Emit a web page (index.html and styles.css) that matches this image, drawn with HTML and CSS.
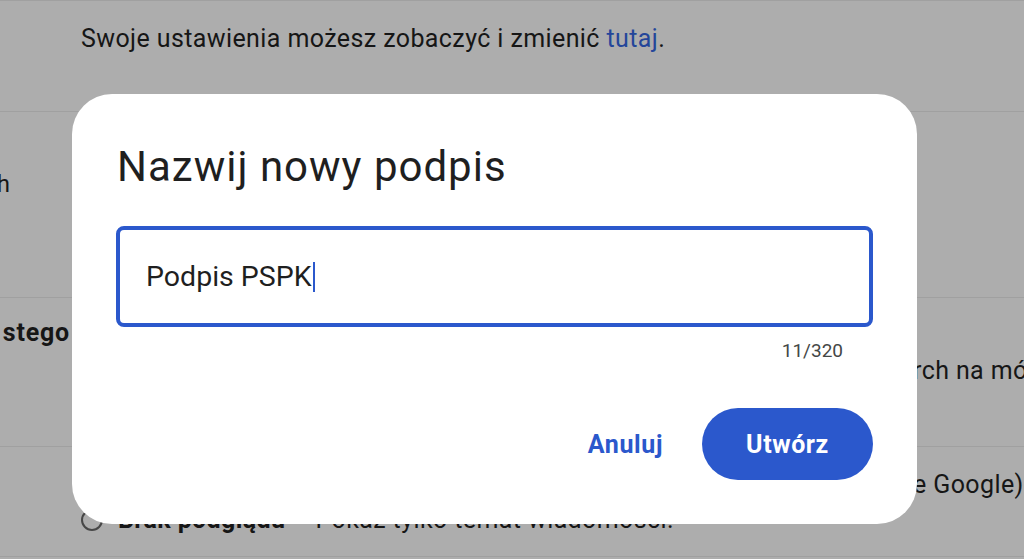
FILE: index.html
```html
<!DOCTYPE html>
<html lang="pl">
<head>
<meta charset="utf-8">
<title>Nazwij nowy podpis</title>
<link rel="stylesheet" href="styles.css">
</head>
<body>
<main class="page">
  <section class="row row-intro">
    <div class="label"></div>
    <div class="content">
      <p class="text">Swoje ustawienia możesz zobaczyć i zmienić <a class="link" href="#">tutaj</a>.</p>
    </div>
  </section>
  <section class="row row-a">
    <div class="label"><span class="label-text label-a">Wyświetlanie w wątkach</span></div>
    <div class="content"></div>
  </section>
  <section class="row row-b">
    <div class="label"><span class="label-text">Styl tekstu czy stego</span></div>
    <div class="content">
      <p class="text line-b"><span class="hidden-run">Pokazuj sugestie podczas pisania wiadomości i podczas wyszukiwania w poczcie</span>rch na mówionych</p>
    </div>
  </section>
  <section class="row row-c">
    <div class="label"></div>
    <div class="content">
      <p class="text line-c"><span class="hidden-run">Podgląd wiadomości – pokaż fragment treści obok tematu (ustawienie domyślne</span>e Google)</p>
      <label class="radio-line"><span class="radio"></span><span class="text"><b>Brak podglądu</b> – Pokaż tylko temat wiadomości.</span></label>
    </div>
  </section>
</main>

<div class="dialog" role="dialog" aria-labelledby="dlg-title">
  <h1 class="dialog-title" id="dlg-title">Nazwij nowy podpis</h1>
  <div class="field">
    <span class="field-value">Podpis PSPK</span><span class="caret"></span>
  </div>
  <div class="counter">11/320</div>
  <div class="actions">
    <button class="btn btn-text" type="button">Anuluj</button>
    <button class="btn btn-filled" type="button">Utwórz</button>
  </div>
</div>
</body>
</html>
```
FILE: styles.css
```css
html, body {
  margin: 0;
  padding: 0;
  height: 100%;
  overflow: hidden;
}
body {
  background: #adadad;
  font-family: Roboto, "Liberation Sans", sans-serif;
  color: #161616;
}
.page {
  border-top: 1px solid #a0a0a0;
}
.row {
  display: flex;
  gap: 9px;
  border-bottom: 1px solid #a0a0a0;
  box-sizing: border-box;
}
.label {
  width: 72px;
  flex: none;
  display: flex;
  justify-content: flex-end;
  overflow: hidden;
}
.label-text {
  white-space: nowrap;
  font-weight: 700;
  font-size: 25px;
  line-height: 30px;
  letter-spacing: 0.8px;
  padding-right: 2px;
}
.label-a {
  font-weight: 400;
  font-size: 24px;
  letter-spacing: 0;
  padding-right: 62px;
}
.content {
  flex: 1;
  min-width: 0;
  white-space: nowrap;
}
.text {
  margin: 0;
  font-size: 25px;
  line-height: 30px;
  letter-spacing: 0.4px;
}
.hidden-run {
  display: inline-block;
  vertical-align: top;
  width: 832px;
  overflow: hidden;
}
.link {
  color: #24469a;
  text-decoration: none;
}
.row-intro {
  height: 111px;
  padding-top: 23px;
}
.row-a {
  height: 186px;
  padding-top: 57px;
}
.row-b {
  height: 149px;
  padding-top: 20px;
}
.line-b {
  margin-top: 38px;
}
.row-c {
  height: 110px;
  padding-top: 23px;
}
.radio-line {
  display: flex;
  align-items: center;
  gap: 15px;
  margin-top: 5px;
}
.radio {
  width: 18px;
  height: 18px;
  border: 2px solid #474747;
  border-radius: 50%;
  flex: none;
}

.dialog {
  position: fixed;
  left: 72px;
  top: 94px;
  width: 845px;
  height: 430px;
  box-sizing: border-box;
  background: #fff;
  border-radius: 40px;
  padding: 49px 44px 44px 44px;
  display: flex;
  flex-direction: column;
}
.dialog-title {
  margin: 0 0 0 1px;
  font-size: 42px;
  line-height: 48px;
  font-weight: 400;
  letter-spacing: 1px;
  color: #1f1f1f;
}
.field {
  margin-top: 35px;
  height: 101px;
  box-sizing: border-box;
  border: 4px solid #2b58cc;
  border-radius: 8px;
  padding-left: 26px;
  display: flex;
  align-items: center;
}
.field-value {
  font-size: 28.5px;
  line-height: 34px;
  color: #1f1f1f;
}
.caret {
  width: 2px;
  height: 30px;
  background: #2b58cc;
  margin-left: 1px;
}
.counter {
  align-self: flex-end;
  margin-top: 12px;
  margin-right: 30px;
  font-size: 19px;
  line-height: 24px;
  color: #444746;
}
.actions {
  margin-top: auto;
  display: flex;
  justify-content: flex-end;
  align-items: center;
  gap: 15px;
}
.btn {
  font-family: Roboto, "Liberation Sans", sans-serif;
  font-weight: 700;
  font-size: 25px;
  letter-spacing: 0.6px;
  border: 0;
  cursor: pointer;
}
.btn-text {
  background: transparent;
  color: #2b58cc;
  padding: 0 24px;
  height: 72px;
}
.btn-filled {
  background: #2b58cc;
  color: #fff;
  width: 171px;
  height: 72px;
  border-radius: 36px;
}
```
